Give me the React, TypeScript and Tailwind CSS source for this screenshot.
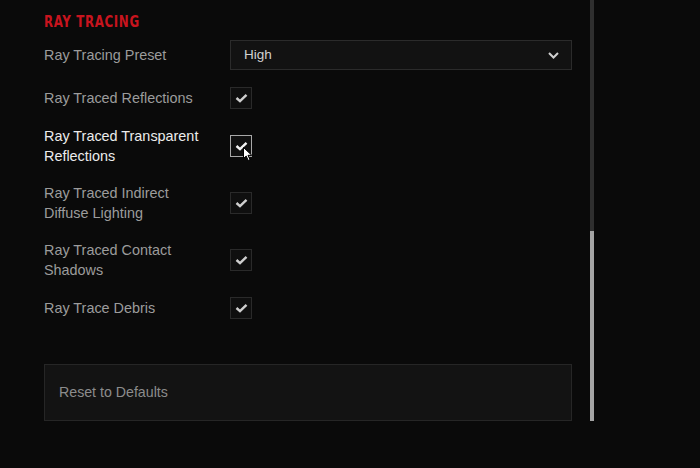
import React from "react";

const rows = [
  { label: ["Ray Traced Reflections"], active: false },
  { label: ["Ray Traced Transparent", "Reflections"], active: true },
  { label: ["Ray Traced Indirect", "Diffuse Lighting"], active: false },
  { label: ["Ray Traced Contact", "Shadows"], active: false },
  { label: ["Ray Trace Debris"], active: false },
];

const Check = ({ active }: { active: boolean }) => (
  <div
    className={`relative w-[22px] h-[22px] flex items-center justify-center border ${
      active ? "border-[#a8a8a8] bg-[#101010]" : "border-[#2a2a2a] bg-[#0f0f0f]"
    }`}
  >
    <svg width="13" height="10" viewBox="0 0 13 10">
      <path
        d="M1.5 5 L5 8.2 L11.5 1.8"
        fill="none"
        stroke={active ? "#f2f2f2" : "#cfcfcf"}
        strokeWidth="2.4"
      />
    </svg>
    {active && (
      <svg
        className="absolute left-[12px] top-[11px]"
        width="11"
        height="15"
        viewBox="0 0 11 15"
      >
        <path
          d="M0.5 0.5 L0.5 11.5 L3.2 9 L5.2 13.5 L7 12.7 L5 8.3 L8.8 8.3 Z"
          fill="#ffffff"
          stroke="#000000"
          strokeWidth="1"
        />
      </svg>
    )}
  </div>
);

export default function App() {
  return (
    <div className="w-[700px] h-[468px] bg-[#0a0a0a] flex font-['Liberation_Sans',Arial,sans-serif] overflow-hidden">
      <div className="w-[528px] ml-[44px] pt-[10px] flex flex-col">
        <div className="h-[20px] mb-[10px]">
          <span className="inline-block origin-left scale-x-[0.82] leading-[20px] text-[16px] font-bold tracking-[0.8px] text-[#c8141e] font-['DejaVu_Sans_Condensed',sans-serif]">
            RAY TRACING
          </span>
        </div>
        <div className="flex flex-col gap-[17px]">
          <div className="flex items-center h-[30px]">
            <div className="w-[186px] pt-[2px] text-[14.4px] text-[#9c9c9c]">
              Ray Tracing Preset
            </div>
            <div className="flex-1 h-[30px] flex items-center justify-between border border-[#2b2b2b] bg-[#121212] pl-[13px] pr-[12px]">
              <span className="text-[13.5px] text-[#d2d2d2]">High</span>
              <svg width="11" height="7" viewBox="0 0 11 7">
                <path
                  d="M1 1 L5.5 5.5 L10 1"
                  fill="none"
                  stroke="#cfcfcf"
                  strokeWidth="2"
                />
              </svg>
            </div>
          </div>
          {rows.map((row, i) => (
            <div key={i} className="flex items-center">
              <div
                className={`w-[186px] text-[14.4px] leading-[20px] ${
                  row.active ? "text-[#ececec]" : "text-[#9c9c9c]"
                }`}
              >
                {row.label.map((l, j) => (
                  <div key={j}>{l}</div>
                ))}
              </div>
              <Check active={row.active} />
            </div>
          ))}
        </div>
        <div className="mt-[45px] h-[57px] flex items-center border border-[#262626] bg-[#131313] pl-[14px]">
          <span className="text-[14.2px] text-[#8c8c8c]">Reset to Defaults</span>
        </div>
      </div>
      <div className="ml-[18px] w-[4px] h-[421px] flex flex-col">
        <div className="h-[231px] bg-[#2f2f2f]" />
        <div className="flex-1 bg-[#a4a4a4]" />
      </div>
    </div>
  );
}
